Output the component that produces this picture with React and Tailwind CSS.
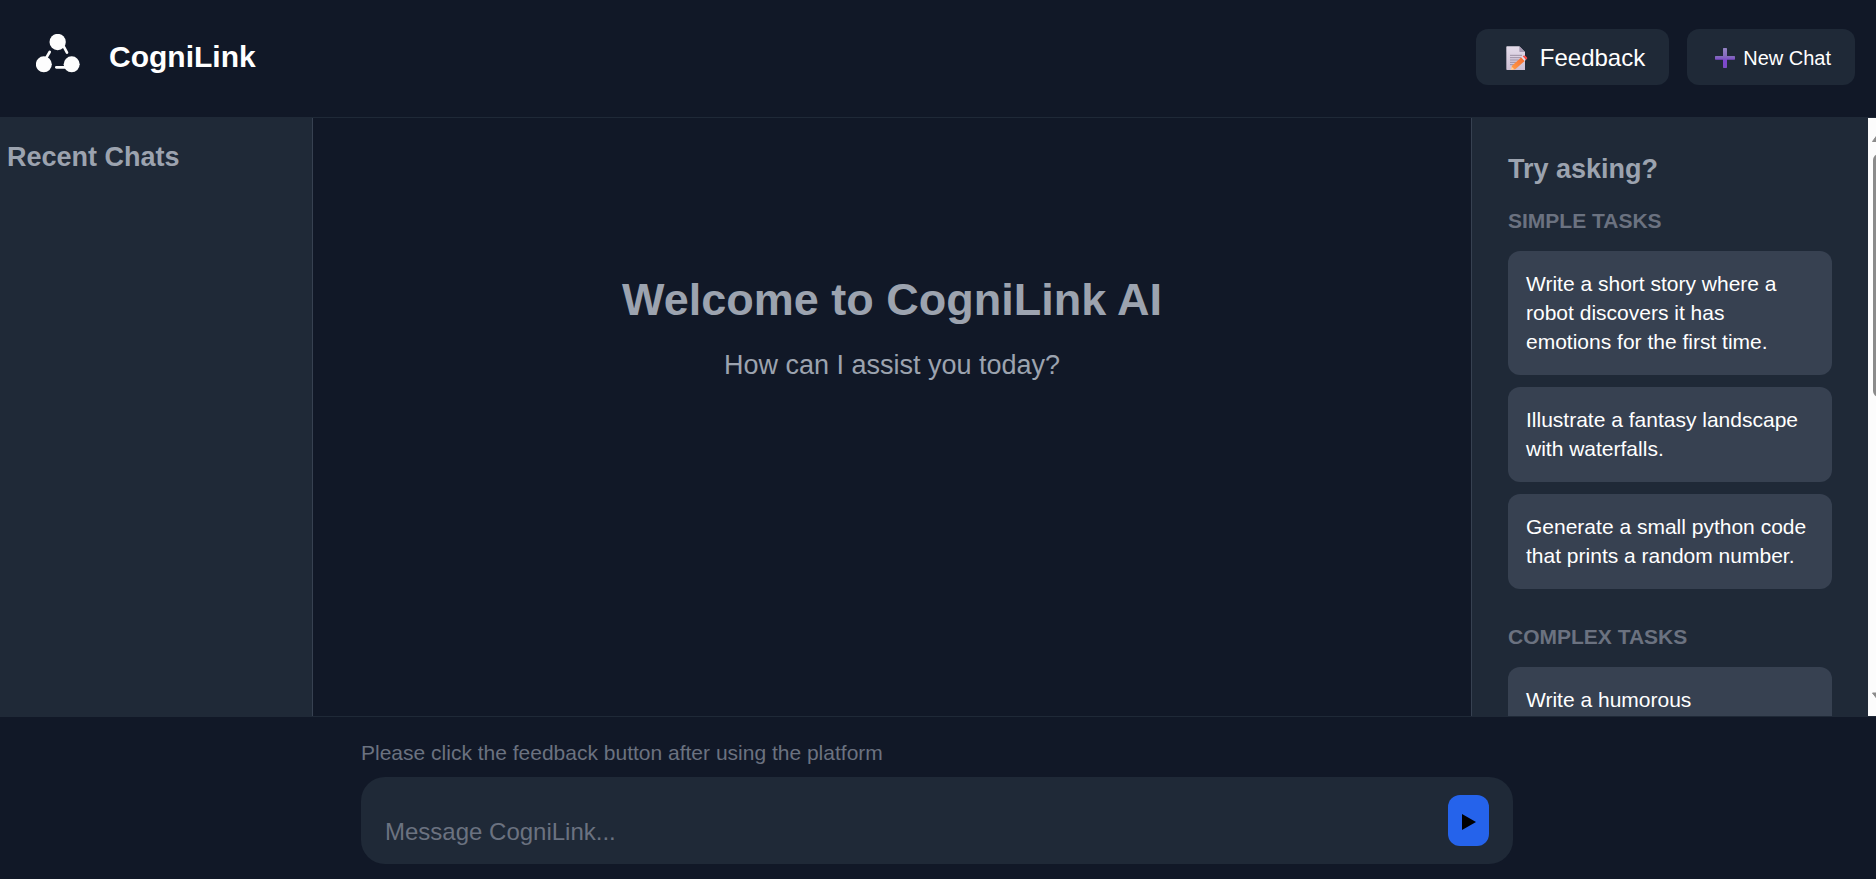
const simpleTasks = [
  'Write a short story where a robot discovers it has emotions for the first time.',
  'Illustrate a fantasy landscape with waterfalls.',
  'Generate a small python code that prints a random number.',
];
const complexTasks = ['Write a humorous'];

function Logo() {
  return (
    <svg className="h-[45px] w-11" viewBox="0 0 132 135" fill="#fdfdfd" aria-hidden="true">
      <circle cx="65" cy="24" r="24.5" />
      <circle cx="23.500" cy="91" r="24" />
      <circle cx="107" cy="91" r="24" />
      <g stroke="#fdfdfd" strokeWidth="8" strokeLinecap="round">
        <path d="M28 76L41 54" />
        <path d="M83 37L93 56" />
        <path d="M61 100H98" />
      </g>
    </svg>
  );
}

function MemoIcon() {
  return (
    <svg className="h-[25px] w-[22px]" viewBox="0 0 66 75" aria-hidden="true">
      <defs>
        <linearGradient id="paper" x1="0" y1="0" x2="0" y2="1">
          <stop offset="0" stopColor="#e4dcea" />
          <stop offset="1" stopColor="#cdbfd4" />
        </linearGradient>
        <linearGradient id="pencil" x1="0" y1="1" x2="1" y2="0">
          <stop offset="0" stopColor="#ffa04a" />
          <stop offset="1" stopColor="#f5682f" />
        </linearGradient>
      </defs>
      <path d="M3 1H40L57 18V72H3Q1 72 1 70V3Q1 1 3 1Z" fill="url(#paper)" />
      <path d="M40 1L57 18H42Q40 18 40 16Z" fill="#a79bb3" />
      <g stroke="#8f8499" strokeWidth="2.500">
        <path d="M12 28H48M12 35H46M12 42H38M12 49H31M12 56H25" />
      </g>
      <path d="M15 72L18 59L46 34L56 45L28 70Z" fill="url(#pencil)" />
      <path d="M15 72L17 62L25 70Z" fill="#ffd0a0" />
      <path d="M46 34L50 31L60 41L56 45Z" fill="#e6dfe9" />
      <path d="M50 31Q55 26 61 32T60 41Z" fill="#f8504a" />
    </svg>
  );
}

function PlusIcon() {
  return (
    <svg className="size-5" viewBox="0 0 60 60" aria-hidden="true">
      <defs>
        <linearGradient id="plus" x1="0" y1="0" x2="0" y2="1">
          <stop offset="0" stopColor="#9483c4" />
          <stop offset="0.450" stopColor="#8268bd" />
          <stop offset="0.600" stopColor="#7e46cf" />
          <stop offset="1" stopColor="#7a4cc4" />
        </linearGradient>
      </defs>
      <path
        d="M26 0H34Q36 0 36 2V24H58Q60 24 60 26V33Q60 35 58 35H36V58Q36 60 34 60H26Q24 60 24 58V35H2Q0 35 0 33V26Q0 24 2 24H24V2Q24 0 26 0Z"
        fill="url(#plus)"
      />
    </svg>
  );
}

function ScrollStrip() {
  return (
    <div className="flex w-2 shrink-0 flex-col justify-between overflow-hidden bg-[#fcfcfc]" aria-hidden="true">
      <div className="pt-4">
        <svg className="h-2 w-2" viewBox="0 0 8 8">
          <path d="M4.500 7.500L10 0V7.500Z" fill="#8b8b8b" stroke="#8b8b8b" strokeLinejoin="round" />
        </svg>
        <div className="mt-3 ml-[5px] h-[243px] w-3 rounded-full bg-[#8b8b8b]" />
      </div>
      <svg className="mb-4 h-2 w-2" viewBox="0 0 8 8">
        <path d="M4.500 1L10 8V1Z" fill="#8b8b8b" stroke="#8b8b8b" strokeLinejoin="round" />
      </svg>
    </div>
  );
}

function TaskGroup({ title, tasks }) {
  return (
    <section>
      <h3 className="mb-4 text-[21px] leading-7 font-bold text-[#6b7280] uppercase">{title}</h3>
      <ul className="flex flex-col gap-3">
        {tasks.map((task) => (
          <li key={task}>
            <button
              type="button"
              className="block w-full rounded-xl bg-[#374151] px-[18px] pt-[18px] pb-[19px] text-left text-[21px] leading-[29px] text-white"
            >
              {task}
            </button>
          </li>
        ))}
      </ul>
    </section>
  );
}

export default function App() {
  return (
    <div className="flex h-screen flex-col overflow-hidden bg-[#111827] font-['Liberation_Sans',Arial,sans-serif] text-white">
      <header className="flex h-[118px] shrink-0 items-center justify-between border-b border-[#1f2937] pr-[21px] pb-1 pl-9">
        <div className="flex items-center gap-[29px]">
          <Logo />
          <h1 className="text-[30px] leading-9 font-bold">CogniLink</h1>
        </div>
        <div className="flex gap-[18px]">
          <button type="button" className="flex h-14 items-center gap-3 rounded-xl bg-[#1f2937] pt-[3px] pr-6 pl-[30px] text-2xl">
            <MemoIcon />
            Feedback
          </button>
          <button type="button" className="flex h-14 items-center gap-2 rounded-xl bg-[#1f2937] pt-[3px] pr-6 pl-7 text-xl">
            <PlusIcon />
            New Chat
          </button>
        </div>
      </header>

      <div className="flex min-h-0 flex-1">
        <aside className="w-[313px] shrink-0 border-r border-[#374151] bg-[#1f2937] px-[7px] py-[23px]">
          <h2 className="text-[27px] leading-8 font-bold text-[#9ca3af]">Recent Chats</h2>
        </aside>

        <main className="flex-1 px-9 pt-[155px] text-center text-[#9ca3af]">
          <h2 className="text-[45px] leading-[54px] font-bold">Welcome to CogniLink AI</h2>
          <p className="mt-5 text-[27px] leading-9">How can I assist you today?</p>
        </main>

        <aside className="flex w-[405px] shrink-0 border-l border-[#374151] bg-[#1f2937]">
          <div className="min-w-0 flex-1 overflow-hidden px-9 pt-[35px]">
            <h2 className="mb-[22px] text-[27px] leading-8 font-bold text-[#9ca3af]">Try asking?</h2>
            <div className="flex flex-col gap-[34px]">
              <TaskGroup title="Simple Tasks" tasks={simpleTasks} />
              <TaskGroup title="Complex Tasks" tasks={complexTasks} />
            </div>
          </div>
          <ScrollStrip />
        </aside>
      </div>

      <footer className="shrink-0 border-t border-[#1f2937] pt-[22px] pr-[38px] pb-[15px] pl-9">
        <form className="mx-auto max-w-[1152px]" onSubmit={(e) => e.preventDefault()}>
          <label htmlFor="message" className="block text-[21px] leading-7 text-[#6b7280]">
            Please click the feedback button after using the platform
          </label>
          <div className="mt-[10px] flex items-center rounded-3xl bg-[#1f2937] px-6 py-[18px]">
            <textarea
              id="message"
              rows={1}
              placeholder="Message CogniLink..."
              className="block h-[51px] min-w-0 flex-1 resize-none overflow-hidden bg-transparent pt-[23px] text-2xl leading-7 outline-none placeholder:text-[#6b7280]"
            />
            <button
              type="submit"
              aria-label="Send"
              className="flex h-[51px] w-[41px] items-center justify-center rounded-xl bg-[#2563eb] pt-[2px]"
            >
              <svg className="h-4 w-[14px]" viewBox="0 0 14 16" aria-hidden="true">
                <path d="M0 0L14 8L0 16Z" fill="#000" />
              </svg>
            </button>
          </div>
        </form>
      </footer>
    </div>
  );
}
